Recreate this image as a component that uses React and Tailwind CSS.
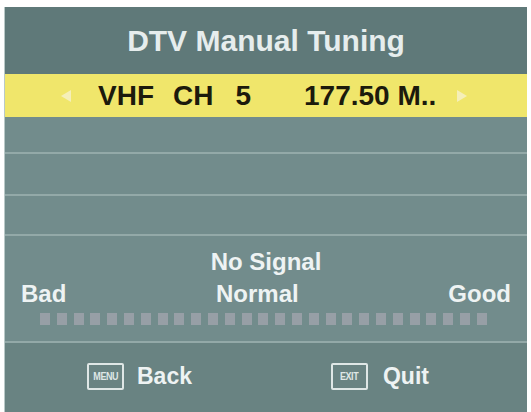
const font = { fontFamily: '"Liberation Sans", Arial, sans-serif' };

function Arrow({ dir }) {
  return (
    <svg width="12" height="14" viewBox="0 0 12 14" className="opacity-75">
      {dir === "left" ? (
        <polygon points="11,1 1,7 11,13" fill="#f7f3d2" />
      ) : (
        <polygon points="1,1 11,7 1,13" fill="#f7f3d2" />
      )}
    </svg>
  );
}

function KeyIcon({ label }) {
  return (
    <div className="w-[37px] h-[27px] border-2 border-[#dfe7e6] rounded-[2px] flex items-center justify-center">
      <span className="inline-block text-[10px] font-bold leading-none text-[#dfe7e6] tracking-[-0.5px] scale-x-90">
        {label}
      </span>
    </div>
  );
}

function Line() {
  return <div className="h-[2px] bg-[#93a9a8]" />;
}

export default function App() {
  const dots = Array.from({ length: 27 });
  return (
    <div className="w-[531px] h-[412px] bg-white overflow-hidden pt-[7px] pl-[4px]" style={font}>
      <div className="w-[523px] h-[405px] flex flex-col bg-[#728c8c] border-l border-[#b9c9c8]">
        <div className="h-[67px] bg-[#5f7979] flex items-center justify-center">
          <span className="text-[30px] font-bold text-[#e6eded] leading-none">DTV Manual Tuning</span>
        </div>
        <div className="h-[43px] bg-[#f0e66b] flex items-center text-[28px] font-bold text-[#1c1a0c] leading-none">
          <div className="ml-[55px]"><Arrow dir="left" /></div>
          <span className="ml-[26px]">VHF</span>
          <span className="ml-[19px]">CH</span>
          <span className="ml-[22px]">5</span>
          <span className="ml-[53px]">177.50 M..</span>
          <div className="ml-[20px]"><Arrow dir="right" /></div>
        </div>
        <div className="h-[35px]" />
        <Line />
        <div className="h-[40px]" />
        <Line />
        <div className="h-[38px]" />
        <Line />
        <div className="h-[105px] flex flex-col pt-[14px] text-[24px] font-bold text-[#eef3f3]">
          <div className="leading-[24px] text-center">No Signal</div>
          <div className="mt-[8px] leading-[24px] flex justify-between px-[16px]">
            <span>Bad</span>
            <span>Normal</span>
            <span>Good</span>
          </div>
          <div className="mt-[7px] flex gap-[6.8px] pl-[35px]">
            {dots.map((_, i) => (
              <div key={i} className="w-[10px] h-[12px] bg-[#a6a6b1] opacity-70" />
            ))}
          </div>
        </div>
        <Line />
        <div className="flex-1 bg-[#698382] flex items-center text-[23px] font-bold text-[#eef3f3] pb-[2px]">
          <div className="ml-[82px]"><KeyIcon label="MENU" /></div>
          <span className="ml-[13px]">Back</span>
          <div className="ml-[139px]"><KeyIcon label="EXIT" /></div>
          <span className="ml-[15px]">Quit</span>
        </div>
      </div>
    </div>
  );
}
